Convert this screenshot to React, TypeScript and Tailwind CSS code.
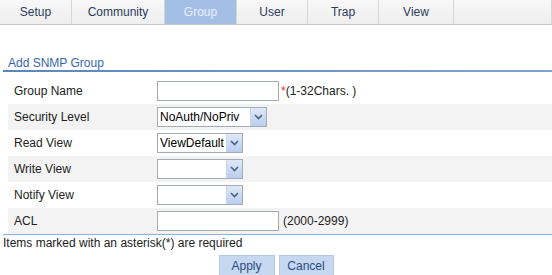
import React from "react";

const tabs = [
  { name: "Setup", w: 72 },
  { name: "Community", w: 93 },
  { name: "Group", w: 72 },
  { name: "User", w: 71 },
  { name: "Trap", w: 71 },
  { name: "View", w: 75 },
];

function Arrow() {
  return (
    <div className="w-[16px] h-[18px] bg-gradient-to-b from-[#dfe8f7] to-[#b9cdee] border-l border-[#c9d6ea] flex items-center justify-center">
      <svg width="9" height="6" viewBox="0 0 9 6">
        <path d="M1 1 L4.5 4.5 L8 1" fill="none" stroke="#4d6185" strokeWidth="1.6" />
      </svg>
    </div>
  );
}

function Select({ w, value }: { w: number; value: string }) {
  return (
    <div
      className="h-[20px] border border-[#a5acb5] bg-white flex items-center justify-between"
      style={{ width: w }}
    >
      <span className="pl-[2px] text-[12px] text-black leading-none whitespace-nowrap">{value}</span>
      <Arrow />
    </div>
  );
}

function Input() {
  return <div className="w-[122px] h-[20px] border border-[#a5acb5] bg-white" />;
}

function Row({ label, bg, children }: { label: string; bg: boolean; children: React.ReactNode }) {
  return (
    <div className={`h-[26px] flex items-center ${bg ? "bg-[#f3f3f3]" : "bg-white"}`}>
      <div className="w-[149px] pl-[6px] text-[12px] text-[#222]">{label}</div>
      <div className="flex items-center">{children}</div>
    </div>
  );
}

export default function App() {
  return (
    <div
      className="w-[552px] h-[275px] bg-white overflow-hidden relative"
      style={{ fontFamily: '"Liberation Sans", Arial, sans-serif' }}
    >
      <div className="flex h-[25px] border-b border-[#c8c8c8] w-[552px]">
        {tabs.map((t) => (
          <div
            key={t.name}
            className={`h-full flex items-center justify-center text-[12px] border-r border-[#d6d6d6] ${
              t.name === "Group"
                ? "bg-[#a4bfe6] text-[#e9eff9]"
                : "bg-gradient-to-b from-[#f8f8f8] to-[#eeeeee] text-[#2b3c60]"
            }`}
            style={{ width: t.w }}
          >
            {t.name}
          </div>
        ))}
        <div className="flex-1 h-full bg-gradient-to-b from-[#f8f8f8] to-[#eeeeee] border-r border-[#d6d6d6]" />
      </div>

      <div className="mt-[32px] pl-[8px] text-[12px] text-[#3466b0] leading-[13px]">Add SNMP Group</div>
      <div className="ml-[3px] h-[2px] bg-gradient-to-r from-[#5c86c0] to-[#7fa3d4]" />

      <div className="ml-[8px] mt-[6px]">
        <Row label="Group Name" bg={false}>
          <Input />
          <span className="ml-[2px] text-[12px] text-[#e53030]">*</span>
          <span className="text-[12px] text-[#222]">(1-32Chars. )</span>
        </Row>
        <Row label="Security Level" bg={true}>
          <Select w={110} value="NoAuth/NoPriv" />
        </Row>
        <Row label="Read View" bg={false}>
          <Select w={86} value="ViewDefault" />
        </Row>
        <Row label="Write View" bg={true}>
          <Select w={86} value="" />
        </Row>
        <Row label="Notify View" bg={false}>
          <Select w={86} value="" />
        </Row>
        <Row label="ACL" bg={true}>
          <Input />
          <span className="ml-[4px] text-[12px] text-[#222]">(2000-2999)</span>
        </Row>
      </div>
      <div className="ml-[3px] h-px bg-[#8fb2e0]" />
      <div className="pl-[3px] mt-[1px] text-[12px] text-[#222] leading-[14px]">
        Items marked with an asterisk(*) are required
      </div>
      <div className="flex justify-center gap-[4px] mt-[5px]">
        <div className="w-[56px] h-[22px] bg-[#c6d7f0] border border-[#b3c7e6] text-[12px] text-[#2a4a80] flex items-center justify-center">
          Apply
        </div>
        <div className="w-[55px] h-[22px] bg-[#c6d7f0] border border-[#b3c7e6] text-[12px] text-[#2a4a80] flex items-center justify-center">
          Cancel
        </div>
      </div>
    </div>
  );
}
